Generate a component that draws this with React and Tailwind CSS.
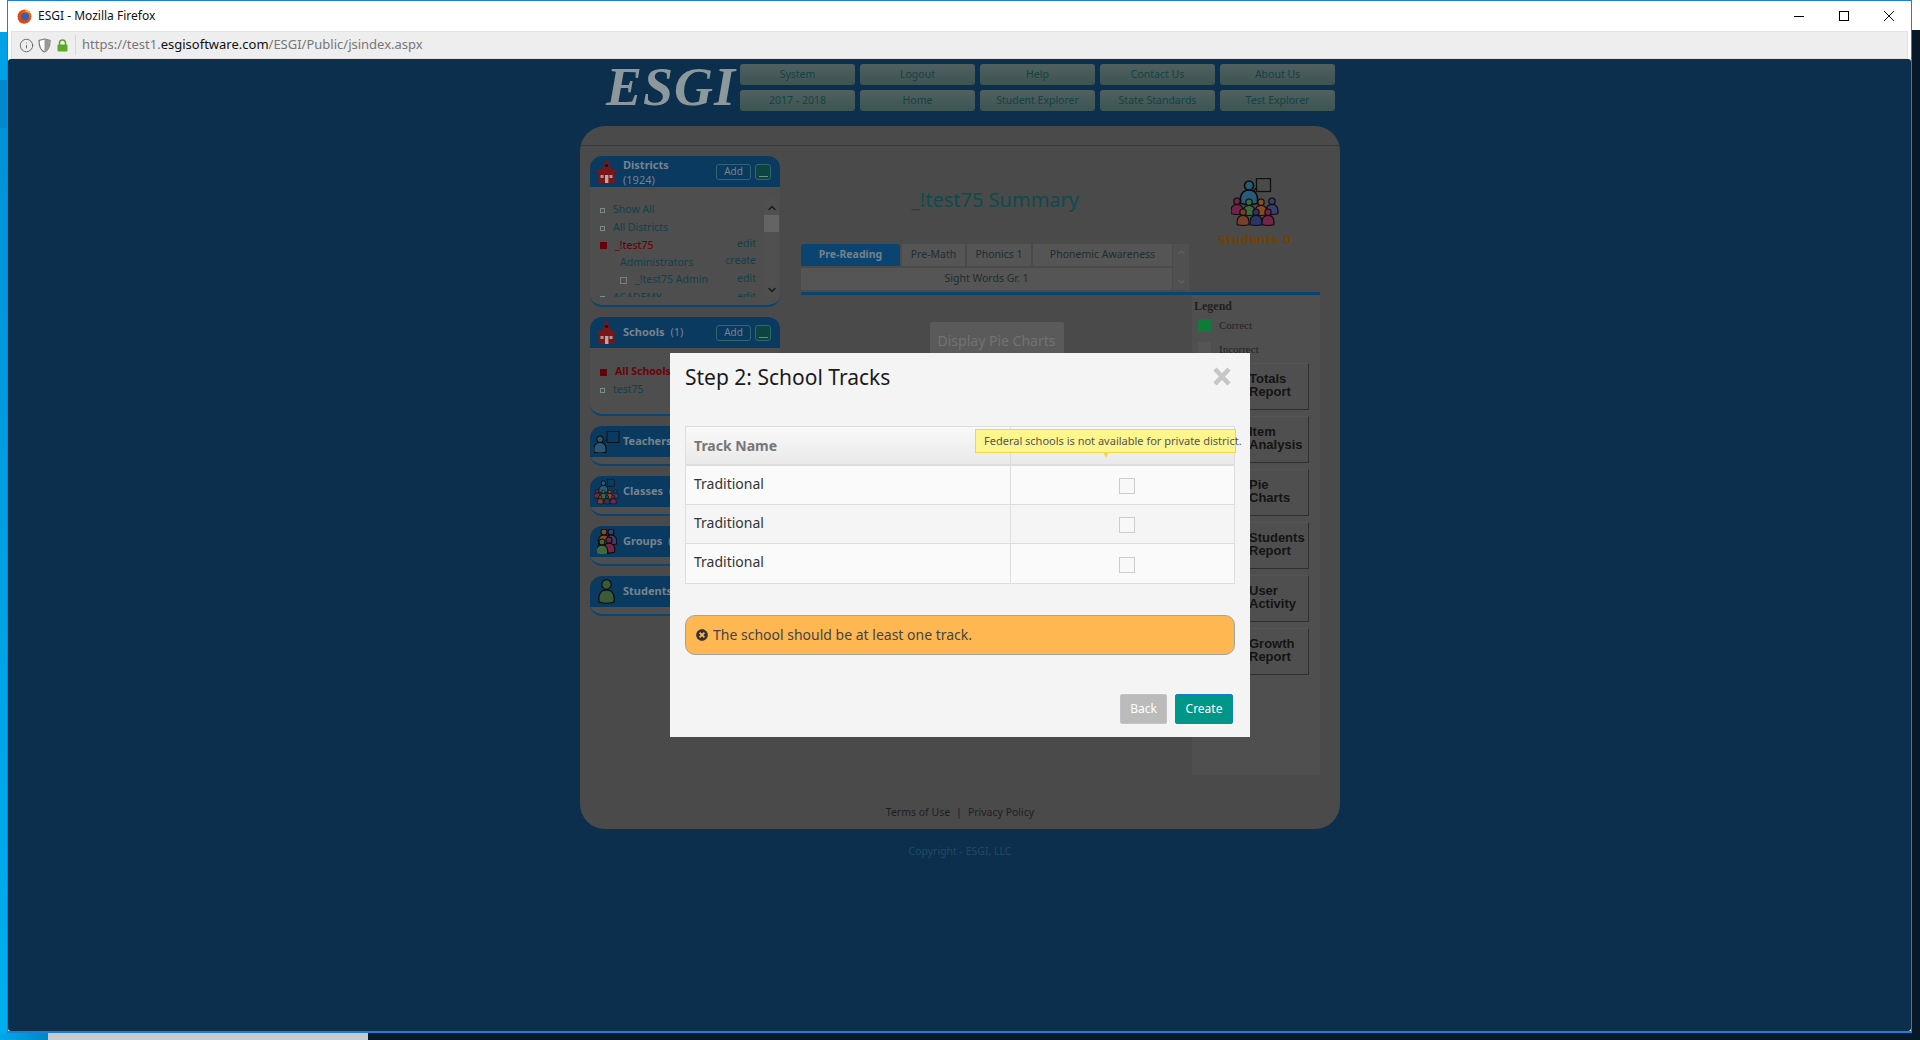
import { ChevronUp, ChevronDown, Info } from 'lucide-react';
import { FaTimesCircle } from 'react-icons/fa';

const topButtons = ['System', 'Logout', 'Help', 'Contact Us', 'About Us', '2017 - 2018', 'Home', 'Student Explorer', 'State Standards', 'Test Explorer'];
const reports = [['Totals', 'Report'], ['Item', 'Analysis'], ['Pie', 'Charts'], ['Students', 'Report'], ['User', 'Activity'], ['Growth', 'Report']];

function Person({ x, y, s = 1, fill }) {
  return (
    <g transform={`translate(${x} ${y}) scale(${s})`} stroke="#0c0c0c" strokeWidth="1.1" fill={fill}>
      <path d="M-5.5 15 C-6.5 9 -4 6 0 6 C4 6 6.5 9 5.5 15 Q0 16.5 -5.5 15 Z" />
      <circle cx="0" cy="3" r="3" />
    </g>
  );
}

function FirefoxIcon() {
  return (
    <svg width="15" height="15" viewBox="0 0 16 16">
      <circle cx="8" cy="8" r="7.5" fill="#e8651d" />
      <circle cx="8.5" cy="8" r="4.4" fill="#3a5ea8" />
      <path d="M1 9 C1 4 5 1 9 1 C6 2 4 4 4 7 C4 11 8 13 11 12 C13 11 14 9 14 7 C15 11 12 15.5 8 15.5 C4 15.5 1 13 1 9 Z" fill="#d9481c" />
      <path d="M9 1 C12 1 14 3 15 6 C13 4 11 3 9 3 Z" fill="#f6b030" />
    </svg>
  );
}

function SchoolIcon() {
  return (
    <svg width="21" height="23" viewBox="0 0 21 23">
      <path d="M10.5 0 L13 3 V6 L16 10 H21 L18.5 13 V23 H2.5 V13 L0 10 H5 L8 6 V3 Z" fill="#7a1518" />
      <circle cx="10.5" cy="5.5" r="1.6" fill="#111" />
      <rect x="9" y="15" width="3.4" height="8" fill="#b7aaa5" />
      <rect x="4.5" y="15" width="3" height="3" fill="#a89a95" />
      <rect x="13.5" y="15" width="3" height="3" fill="#a89a95" />
    </svg>
  );
}

function TeacherIcon() {
  return (
    <svg width="26" height="22" viewBox="0 0 26 22">
      <rect x="13" y="0.5" width="12" height="11" fill="none" stroke="#111" strokeWidth="1" />
      <path d="M8 14 L13 8" stroke="#111" strokeWidth="1" />
      <Person x={6} y={5} s={1.08} fill="#2a5874" />
    </svg>
  );
}

function ClassIcon({ w = 48, h = 49 }) {
  return (
    <svg width={w} height={h} viewBox="0 0 48 49">
      <rect x="25.5" y="0.5" width="14" height="13" fill="none" stroke="#111" strokeWidth="1.3" />
      <path d="M19 17 L26 9" stroke="#111" strokeWidth="1.2" />
      <Person x={18} y={3} s={1.5} fill="#295a78" />
      <Person x={6} y={20} s={1.05} fill="#74234a" />
      <Person x={41} y={20} s={1.05} fill="#3a3f6c" />
      <Person x={18} y={21} s={1.05} fill="#3f6a40" />
      <Person x={30} y={21} s={1.05} fill="#8a4a26" />
      <Person x={12} y={31} s={1.05} fill="#7a3f28" />
      <Person x={25} y={31} s={1.05} fill="#2d3562" />
      <Person x={37} y={31} s={1.05} fill="#74234a" />
    </svg>
  );
}

function GroupIcon() {
  return (
    <svg width="20" height="25" viewBox="0 0 20 25">
      <Person x={14} y={0} s={1} fill="#3a3f6c" />
      <Person x={7} y={0} s={1} fill="#8a4a26" />
      <Person x={12} y={8} s={1.02} fill="#74234a" />
      <Person x={5} y={10} s={1} fill="#3f6a40" />
    </svg>
  );
}

function StudentIcon() {
  return (
    <svg width="17" height="25" viewBox="0 0 17 25">
      <path d="M1 23 C0 15 3 11 8.5 11 C14 11 17 15 16 23 Q8.5 25.5 1 23 Z" fill="#3a5a38" stroke="#0a0a0a" strokeWidth="1.2" />
      <circle cx="8.5" cy="5.5" r="4.8" fill="#3a5a38" stroke="#0a0a0a" strokeWidth="1.2" />
    </svg>
  );
}

function SideSection({ icon, title, count, stacked, hasAdd, children }) {
  return (
    <div className="w-[190px] rounded-[12px] border-b-2 border-[#0c4470] bg-[#4e4e4e]">
      <div className="flex h-[31px] items-center rounded-t-[12px] bg-[#0b3a61] pr-[9px]">
        <div className="flex w-[33px] shrink-0 justify-center">{icon}</div>
        {stacked ? (
          <div className="text-[11px] leading-[15px] text-[#77838c]">
            <div className="font-bold">{title}</div>
            <div>{count}</div>
          </div>
        ) : (
          <div className="whitespace-nowrap text-[11px] text-[#77838c]">
            <span className="font-bold">{title}</span>
            <span className="ml-[6px]">{count}</span>
          </div>
        )}
        {hasAdd && (
          <div className="ml-auto flex gap-[4px]">
            <div className="flex h-[16px] w-[35px] items-center justify-center rounded-[3px] border border-[#2f6670] text-[10px] text-[#77838c]">Add</div>
            <div className="flex h-[16px] w-[16px] items-end justify-center rounded-[3px] border border-[#2f6670] bg-[#0b4440] pb-[2px]">
              <div className="h-[1px] w-[9px] bg-[#6d8a88]" />
            </div>
          </div>
        )}
      </div>
      {children || <div className="h-[7px]" />}
    </div>
  );
}

function Row({ h = 'h-[18px]', left, edit, editClass = 'text-[#134049]' }) {
  return (
    <div className={`flex items-center justify-between whitespace-nowrap ${h}`}>
      <div className="flex items-center">{left}</div>
      {edit && <span className={`-mt-[3px] ${editClass}`}>{edit}</span>}
    </div>
  );
}

function Bullet() {
  return <span className="mr-[8px] h-[5px] w-[5px] border border-[#7c8a8c]" />;
}

function RedSquare() {
  return <span className="mr-[8px] h-[7px] w-[7px] bg-[#640006]" />;
}

function DistrictList() {
  return (
    <div className="flex h-[118px] pl-[10px] pt-[12px]">
      <div className="h-[98px] w-[156px] overflow-hidden pt-[2px] text-[10.5px] text-[#134049]">
        <Row left={<><Bullet />Show All</>} />
        <Row left={<><Bullet />All Districts</>} />
        <Row h="h-[17px]" edit="edit" left={<><RedSquare /><span className="font-medium text-[#6a0308]">_!test75</span></>} />
        <Row h="h-[17px]" edit="create" left={<span className="ml-[20px]">Administrators</span>} />
        <Row edit="edit" left={<><span className="ml-[20px] mr-[8px] h-[7px] w-[7px] border border-[#75807f]" />_!test75 Admin</>} />
        <Row edit="edit" left={<><span className="mr-[8px] h-[5px] w-[5px] border border-[#7c8a8c]" />ACADEMY</>} />
      </div>
      <div className="ml-[8px] flex h-[98px] w-[15px] flex-col items-center bg-[#505050]">
        <ChevronUp size={12} strokeWidth={3} color="#1c1c1c" className="mt-[3px]" />
        <div className="mt-[1px] h-[17px] w-full bg-[#646464]" />
        <ChevronDown size={12} strokeWidth={3} color="#1c1c1c" className="mt-auto mb-[1px]" />
      </div>
    </div>
  );
}

function Modal() {
  const rows = ['bg-[#fafafa]', 'bg-[#f5f5f5]', 'bg-[#fafafa]'];
  return (
    <div className="absolute left-[662px] top-[294px] flex h-[384px] w-[580px] flex-col bg-[#f4f4f4] px-[15px]">
      <div className="flex h-[50px] items-center justify-between">
        <h2 className="text-[21px] text-[#1b1b1b]">Step 2: School Tracks</h2>
        <svg width="18" height="19" viewBox="0 0 18 19" className="-mt-[3px] mr-[4px]">
          <path d="M2 2 L16 17 M16 2 L2 17" stroke="#c6c6c6" strokeWidth="4.6" />
        </svg>
      </div>
      <table className="relative mt-[23px] w-[550px] table-fixed border-collapse text-[14px] text-[#333]">
        <thead>
          <tr className="h-[38px] bg-gradient-to-b from-[#f9f9f9] to-[#e9e9e9]">
            <th className="w-[325px] border border-b-2 border-[#ddd] pl-[8px] text-left font-bold text-[#777]">Track Name</th>
            <th className="border border-b-2 border-[#ddd]" />
          </tr>
        </thead>
        <tbody>
          {rows.map((bg, i) => (
            <tr key={i} className={`h-[39.5px] ${bg}`}>
              <td className="border border-[#ddd] pb-[3px] pl-[8px]">Traditional</td>
              <td className="border border-[#ddd]">
                <div className="ml-[108px] mt-[3px] h-[16px] w-[16px] border border-[#ccc] bg-[#f8f8f8]" />
              </td>
            </tr>
          ))}
        </tbody>
      </table>
      <div className="absolute left-[305px] top-[76px] flex h-[24px] w-[261px] items-center whitespace-nowrap border border-[#efd94a] bg-[#fdf58e] pl-[8px] text-[11px] text-[#555]">
        Federal schools is not available for private district.
        <span className="absolute left-[127px] top-[22px] h-0 w-0 border-x-[3px] border-t-[6px] border-x-transparent border-t-[#efd94a]" />
      </div>
      <div className="mt-[31px] flex h-[40px] items-center rounded-[10px] border border-[#a3a3a3] bg-[#ffb752] pl-[10px] text-[14px] text-[#444]">
        <FaTimesCircle size={12} color="#333" className="mr-[5px]" />
        The school should be at least one track.
      </div>
      <div className="mt-[39px] flex justify-end gap-[8px] pr-[2px] text-[12px] text-white">
        <button className="h-[30px] w-[47px] rounded-[2px] border border-[#c3c3c3] bg-[#bbbbbb]">Back</button>
        <button className="h-[30px] w-[58px] rounded-[2px] border border-[#1580c8] bg-[#009688]">Create</button>
      </div>
    </div>
  );
}

export default function App() {
  return (
    <div className="flex h-[1040px] w-[1920px] flex-col overflow-hidden bg-[#06182a] font-['Noto_Sans',sans-serif]">
      <div className="flex h-[1033px]">
        <div className="flex w-[7px] flex-col">
          <div className="h-[32px] bg-white" />
          <div className="h-[48px] bg-[#00a2e6]" />
          <div className="h-[48px] bg-[#0088cc]" />
          <div className="flex-1 bg-gradient-to-b from-[#0093d6] to-[#00aef0]" />
        </div>

        <div className="flex w-[1905px] flex-col border-x border-b-2 border-t border-[#1a7fd8] bg-white">
          <div className="flex h-[30px] items-center pl-[9px] pr-[17px]">
            <FirefoxIcon />
            <span className="ml-[6px] text-[12px] text-[#111]">ESGI - Mozilla Firefox</span>
            <div className="ml-auto flex items-center gap-[35px]">
              <div className="h-[1px] w-[10px] bg-black" />
              <div className="h-[10px] w-[10px] border border-black" />
              <svg width="10" height="10" viewBox="0 0 10 10"><path d="M0 0 L10 10 M10 0 L0 10" stroke="#111" strokeWidth="1" /></svg>
            </div>
          </div>

          <div className="mx-[3px] flex h-[28px] items-center border border-[#e2e2e2] bg-[#eeeeee] pl-[7px]">
            <Info size={15} color="#666" strokeWidth={1.5} />
            <svg width="13" height="15" viewBox="0 0 13 15" className="ml-[4px]">
              <path d="M6.5 1 L12 2.5 C12 8 11 12 6.5 14 C2 12 1 8 1 2.5 Z" fill="#fff" stroke="#777" strokeWidth="1.2" />
              <path d="M6.5 1 L12 2.5 C12 8 11 12 6.5 14 Z" fill="#999" />
            </svg>
            <svg width="11" height="13" viewBox="0 0 11 13" className="ml-[6px]">
              <path d="M2.5 6 V4 a3 3 0 0 1 6 0 V6" fill="none" stroke="#5ca82a" strokeWidth="1.6" />
              <rect x="0.5" y="5.5" width="10" height="7" rx="1" fill="#5ca82a" />
            </svg>
            <div className="ml-[7px] h-[20px] w-[1px] bg-[#d8d8d8]" />
            <span className="ml-[6px] text-[13px] text-[#777]">
              https://test1.<span className="text-[#111]">esgisoftware.com</span>/ESGI/Public/jsindex.aspx
            </span>
          </div>

          <div className="relative flex-1 rounded-[3px] bg-[#0b2f4c] text-[#134049]">
            <div className="ml-[572px] w-[760px]">
              <div className="flex pt-[5px]">
                <div className="w-[160px] pl-[26px]">
                  <div className="font-['Liberation_Serif',serif] text-[54px] font-bold italic leading-[47px] tracking-[1px] text-[#8c989c]">ESGI</div>
                </div>
                <div className="grid h-[47px] w-[595px] grid-cols-5 gap-x-[5px] gap-y-[5px]">
                  {topButtons.map(label => (
                    <div key={label} className="flex h-[21px] items-center justify-center rounded-[3px] bg-gradient-to-b from-[#50605f] to-[#3c5452] text-[10.5px] text-[#124346]">{label}</div>
                  ))}
                </div>
              </div>

              <div className="mt-[15px] h-[703px] rounded-[25px] bg-[#4a4a4a]">
                <div className="h-[20px] border-b border-[#383838]" />
                <div className="flex pl-[10px] pt-[10px]">
                  <div className="flex w-[190px] flex-col gap-[10px]">
                    <SideSection icon={<SchoolIcon />} title="Districts" count="(1924)" stacked hasAdd>
                      <DistrictList />
                    </SideSection>
                    <SideSection icon={<SchoolIcon />} title="Schools" count="(1)" hasAdd>
                      <div className="h-[66px] pl-[10px] pt-[15px] text-[10.5px] text-[#134049]">
                        <Row left={<><RedSquare /><span className="font-bold text-[#6a0308]">All Schools</span></>} />
                        <Row left={<><Bullet />test75</>} />
                      </div>
                    </SideSection>
                    <SideSection icon={<TeacherIcon />} title="Teachers" count="(0)" />
                    <SideSection icon={<ClassIcon w={25} h={26} />} title="Classes" count="(0)" />
                    <SideSection icon={<GroupIcon />} title="Groups" count="(0)" />
                    <SideSection icon={<StudentIcon />} title="Students" count="(0)" />
                  </div>

                  <div className="ml-[21px] w-[519px]">
                    <div className="flex h-[139px] border-b-[3px] border-[#0c4470]">
                      <div className="w-[388px]">
                        <h1 className="flex h-[88px] items-center justify-center pt-[0px] text-[20px] text-[#0f4a4e]">_!test75 Summary</h1>
                        <div className="flex">
                          <div className="w-[371px] text-[10.5px] text-[#1f2e30]">
                            <div className="flex h-[22px] gap-[2px]">
                              <div className="flex w-[99px] items-center justify-center rounded-t-[3px] bg-[#0b4470] font-bold text-[#73828c]">Pre-Reading</div>
                              <div className="flex w-[63px] items-center justify-center bg-[#555555]">Pre-Math</div>
                              <div className="flex w-[64px] items-center justify-center bg-[#555555]">Phonics 1</div>
                              <div className="flex flex-1 items-center justify-center bg-[#555555]">Phonemic Awareness</div>
                            </div>
                            <div className="mt-[2px] flex h-[22px] items-center justify-center bg-[#555555]">Sight Words Gr. 1</div>
                          </div>
                          <div className="ml-[1px] flex h-[46px] w-[16px] flex-col items-center justify-between bg-[#505050] py-[3px]">
                            <ChevronUp size={11} strokeWidth={3} color="#606060" />
                            <ChevronDown size={11} strokeWidth={3} color="#606060" />
                          </div>
                        </div>
                      </div>
                      <div className="flex w-[131px] flex-col items-center pt-[22px]">
                        <ClassIcon />
                        <div className="mt-[4px] text-[12px] font-bold text-[#6e4206] font-['DejaVu_Sans',sans-serif]">Students 0</div>
                      </div>
                    </div>

                    <div className="flex">
                      <div className="flex w-[391px] justify-center pt-[27px]">
                        <div className="flex h-[36px] w-[134px] items-center justify-center rounded-[2px] bg-[#5a5a5a] text-[14px] text-[#727272]">Display Pie Charts</div>
                      </div>
                      <div className="h-[480px] w-[128px] bg-[#4f4f4f] font-['Liberation_Serif',serif]">
                        <div className="pl-[2px] pt-[4px] text-[12px] font-bold leading-[14px] text-[#1f1f1f]">Legend</div>
                        <div className="mt-[4px] flex items-center pl-[6px] text-[11px] text-[#232323]">
                          <span className="h-[13px] w-[13px] bg-[#0f7a3a]" />
                          <span className="ml-[8px]">Correct</span>
                        </div>
                        <div className="mt-[7px] flex items-center pl-[6px] text-[11px] text-[#232323]">
                          <span className="h-[13px] w-[13px] bg-[#555555]" />
                          <span className="ml-[8px]">Incorrect</span>
                        </div>
                        <div className="ml-[7px] mt-[6px] flex w-[110px] flex-col gap-[6px] font-['Liberation_Sans',sans-serif]">
                          {reports.map(([a, b]) => (
                            <div key={a} className="flex h-[47px] flex-col justify-center border border-b-[#2f2f2f] border-l-[#555] border-r-[#2f2f2f] border-t-[#555] pb-[2px] pl-[49px] text-[13px] font-bold leading-[12.5px] text-[#141414]">
                              <span>{a}</span>
                              <span>{b}</span>
                            </div>
                          ))}
                        </div>
                      </div>
                    </div>
                  </div>
                </div>
                <div className="mt-[30px] text-center text-[10.5px] text-[#1e1e1e]">
                  Terms of Use<span className="mx-[6px]">|</span>Privacy Policy
                </div>
              </div>
              <div className="mt-[15px] text-center text-[10.5px] text-[#1f4a66]">Copyright - ESGI, LLC</div>
            </div>
            <Modal />
          </div>
        </div>

        <div className="w-[8px]">
          <div className="h-[30px] bg-white" />
        </div>
      </div>

      <div className="flex h-[7px]">
        <div className="w-[48px] bg-gradient-to-r from-[#00a8ea] to-[#0088c8]" />
        <div className="w-[320px] bg-[#c8ccd0]" />
      </div>
    </div>
  );
}
